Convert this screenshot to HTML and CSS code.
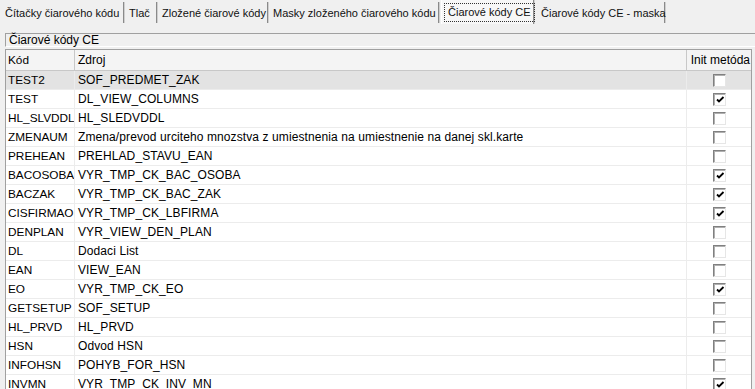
FILE: index.html
```html
<!DOCTYPE html>
<html>
<head>
<meta charset="utf-8">
<link rel="stylesheet" href="styles.css">
</head>
<body>
<div class="tabs">
  <div class="tab t1">Čítačky čiarového kódu</div>
  <div class="tab t2">Tlač</div>
  <div class="tab t3">Zložené čiarové kódy</div>
  <div class="tab t4">Masky zloženého čiarového kódu</div>
  <div class="tab t5 active"><span class="focus">Čiarové kódy CE</span></div>
  <div class="tab t6">Čiarové kódy CE - maska</div>
</div>
<div class="caption">Čiarové kódy CE</div>
<div class="grid">
  <div class="row head">
    <div class="c1">Kód</div><div class="c2">Zdroj</div><div class="c3 right">Init metóda</div>
  </div>
  <div class="row sel"><div class="c1">TEST2</div><div class="c2">SOF_PREDMET_ZAK</div><div class="c3"><span class="cb"></span></div></div>
  <div class="row"><div class="c1">TEST</div><div class="c2">DL_VIEW_COLUMNS</div><div class="c3"><span class="cb on"><svg viewBox="0 0 10 10" width="10" height="10"><path d="M2 4.5 L4 6.5 L8.5 2" fill="none" stroke="#000" stroke-width="1.8"/></svg></span></div></div>
  <div class="row"><div class="c1">HL_SLVDDL</div><div class="c2">HL_SLEDVDDL</div><div class="c3"><span class="cb"></span></div></div>
  <div class="row"><div class="c1">ZMENAUM</div><div class="c2">Zmena/prevod urciteho mnozstva z umiestnenia na umiestnenie na danej skl.karte</div><div class="c3"><span class="cb"></span></div></div>
  <div class="row"><div class="c1">PREHEAN</div><div class="c2">PREHLAD_STAVU_EAN</div><div class="c3"><span class="cb"></span></div></div>
  <div class="row"><div class="c1">BACOSOBA</div><div class="c2">VYR_TMP_CK_BAC_OSOBA</div><div class="c3"><span class="cb on"><svg viewBox="0 0 10 10" width="10" height="10"><path d="M2 4.5 L4 6.5 L8.5 2" fill="none" stroke="#000" stroke-width="1.8"/></svg></span></div></div>
  <div class="row"><div class="c1">BACZAK</div><div class="c2">VYR_TMP_CK_BAC_ZAK</div><div class="c3"><span class="cb on"><svg viewBox="0 0 10 10" width="10" height="10"><path d="M2 4.5 L4 6.5 L8.5 2" fill="none" stroke="#000" stroke-width="1.8"/></svg></span></div></div>
  <div class="row"><div class="c1">CISFIRMAO</div><div class="c2">VYR_TMP_CK_LBFIRMA</div><div class="c3"><span class="cb on"><svg viewBox="0 0 10 10" width="10" height="10"><path d="M2 4.5 L4 6.5 L8.5 2" fill="none" stroke="#000" stroke-width="1.8"/></svg></span></div></div>
  <div class="row"><div class="c1">DENPLAN</div><div class="c2">VYR_VIEW_DEN_PLAN</div><div class="c3"><span class="cb"></span></div></div>
  <div class="row"><div class="c1">DL</div><div class="c2">Dodaci List</div><div class="c3"><span class="cb"></span></div></div>
  <div class="row"><div class="c1">EAN</div><div class="c2">VIEW_EAN</div><div class="c3"><span class="cb"></span></div></div>
  <div class="row"><div class="c1">EO</div><div class="c2">VYR_TMP_CK_EO</div><div class="c3"><span class="cb on"><svg viewBox="0 0 10 10" width="10" height="10"><path d="M2 4.5 L4 6.5 L8.5 2" fill="none" stroke="#000" stroke-width="1.8"/></svg></span></div></div>
  <div class="row"><div class="c1">GETSETUP</div><div class="c2">SOF_SETUP</div><div class="c3"><span class="cb"></span></div></div>
  <div class="row"><div class="c1">HL_PRVD</div><div class="c2">HL_PRVD</div><div class="c3"><span class="cb"></span></div></div>
  <div class="row"><div class="c1">HSN</div><div class="c2">Odvod HSN</div><div class="c3"><span class="cb"></span></div></div>
  <div class="row"><div class="c1">INFOHSN</div><div class="c2">POHYB_FOR_HSN</div><div class="c3"><span class="cb"></span></div></div>
  <div class="row"><div class="c1">INVMN</div><div class="c2">VYR_TMP_CK_INV_MN</div><div class="c3"><span class="cb on"><svg viewBox="0 0 10 10" width="10" height="10"><path d="M2 4.5 L4 6.5 L8.5 2" fill="none" stroke="#000" stroke-width="1.8"/></svg></span></div></div>
</div>
</body>
</html>
```
FILE: styles.css
```css
html, body {
  margin: 0;
  padding: 0;
  background: #f0f0f0;
  font-family: "Liberation Sans", Arial, sans-serif;
  font-size: 12px;
  color: #000;
  overflow: hidden;
}
.tabs {
  display: flex;
  height: 24px;
  align-items: stretch;
  font-size: 11px;
}
.tab {
  box-sizing: border-box;
  height: 21px;
  margin-top: 2px;
  padding: 5px 0 0 5px;
  border-right: 1px solid #8a8a8a;
  box-shadow: 1px 0 0 #cfcfcf;
  white-space: nowrap;
  color: #111;
}
.t1 { width: 124px; }
.t2 { width: 33px; }
.t3 { width: 111px; }
.t4 { width: 171px; }
.t5 { width: 93px; }
.t6 { width: 129px; margin-left: 2px; }
.tab.active {
  height: 24px;
  margin-top: 0;
  margin-left: 2px;
  padding: 3px 0 0 2px;
  background: #f7f7f7;
  border-left: 1px solid #fff;
}
.focus {
  display: inline-block;
  padding: 2px 3px 3px 3px;
  border: 1px dotted #333;
}
.caption {
  box-sizing: border-box;
  margin: 9px 0 0 5px;
  height: 14px;
  padding-left: 3px;
  line-height: 13px;
  border-top: 1px solid #a0a0a0;
  border-left: 1px solid #a0a0a0;
  border-bottom: 1px solid #fff;
}
.grid {
  box-sizing: border-box;
  margin: 2px 0 0 5px;
  width: 747px;
  background: #fff;
  border-top: 1px solid #a0a0a0;
  border-left: 1px solid #a0a0a0;
  border-right: 1px solid #a0a0a0;
}
.row {
  display: grid;
  grid-template-columns: 69px 612px 64px;
  height: 19px;
  box-sizing: border-box;
  border-bottom: 1px solid #ececec;
}
.row > div {
  box-sizing: border-box;
  border-right: 1px solid #ececec;
  padding-left: 3px;
  line-height: 18px;
  white-space: nowrap;
  overflow: hidden;
}
.row > .c1 {
  font-size: 11.8px;
  padding-left: 2px;
}
.row > .c2 {
  letter-spacing: 0.1px;
}
.row > .c3 {
  border-right: none;
  display: flex;
  align-items: center;
  justify-content: center;
  padding-left: 0;
}
.row.head {
  height: 21px;
  background: #f4f4f4;
  border-bottom: 1px solid #c8c8c8;
}
.row.head > div {
  line-height: 21px;
  border-right-color: #c8c8c8;
  letter-spacing: 0;
}
.row.head > .c3 {
  justify-content: flex-end;
  padding-right: 1px;
}
.row.sel {
  background: #e3e3e3;
}
.cb {
  box-sizing: border-box;
  width: 13px;
  height: 13px;
  background: #fff;
  border-top: 1px solid #808080;
  border-left: 1px solid #808080;
  border-bottom: 1px solid #e6e6e6;
  border-right: 1px solid #e6e6e6;
  box-shadow: inset 1px 1px 0 #b0b0b0;
  display: flex;
  align-items: center;
  justify-content: center;
}
.cb svg {
  display: block;
  margin: 1px 0 0 1px;
}
```
